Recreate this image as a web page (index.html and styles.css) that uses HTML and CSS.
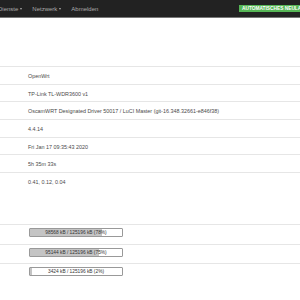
FILE: index.html
```html
<!DOCTYPE html>
<html>
<head>
<meta charset="utf-8">
<link rel="stylesheet" href="styles.css">
</head>
<body>
<header class="navbar">
  <nav class="nav">
    <span class="nav-item first">Dienste <span class="caret"></span></span>
    <span class="nav-item">Netzwerk <span class="caret"></span></span>
    <span class="nav-item">Abmelden</span>
  </nav>
  <span class="badge">AUTOMATISCHES NEULADEN</span>
</header>
<main class="content">
  <div class="table system">
    <div class="row"><div class="label"></div><div class="value">OpenWrt</div></div>
    <div class="row"><div class="label"></div><div class="value">TP-Link TL-WDR3600 v1</div></div>
    <div class="row"><div class="label"></div><div class="value">OscamWRT Designated Driver 50017 / LuCI Master (git-16.348.32661-e846f38)</div></div>
    <div class="row"><div class="label"></div><div class="value">4.4.14</div></div>
    <div class="row"><div class="label"></div><div class="value">Fri Jan 17 09:35:43 2020</div></div>
    <div class="row"><div class="label"></div><div class="value">5h 35m 33s</div></div>
    <div class="row tall"><div class="label"></div><div class="value">0.41, 0.12, 0.04</div></div>
  </div>
  <div class="table memory">
    <div class="row mem"><div class="label"></div><div class="value"><div class="bar"><div class="fill" style="width:78%"></div><span class="bar-text">98568 kB / 125196 kB (78%)</span></div></div></div>
    <div class="row mem"><div class="label"></div><div class="value"><div class="bar"><div class="fill" style="width:75%"></div><span class="bar-text">95144 kB / 125196 kB (75%)</span></div></div></div>
    <div class="row mem"><div class="label"></div><div class="value"><div class="bar"><div class="fill" style="width:2%"></div><span class="bar-text">3424 kB / 125196 kB (2%)</span></div></div></div>
  </div>
</main>
</body>
</html>
```
FILE: styles.css
```css
html, body {
  margin: 0;
  padding: 0;
  background: #fff;
}
body {
  font-family: "Liberation Sans", Arial, sans-serif;
  font-size: 6px;
  color: #4a4a4a;
  width: 300px;
  height: 300px;
  overflow: hidden;
}
.navbar {
  height: 17px;
  background: #222;
  border-bottom: 1px solid #777;
  display: flex;
  align-items: center;
  justify-content: space-between;
}
.nav {
  display: flex;
  align-items: center;
  gap: 10px;
  margin-left: -2px;
}
.nav-item {
  color: #aaa;
  display: flex;
  align-items: center;
  gap: 2px;
}
.caret {
  display: inline-block;
  width: 0;
  height: 0;
  border-left: 1.5px solid transparent;
  border-right: 1.5px solid transparent;
  border-top: 2px solid #aaa;
}
.badge {
  background: #55b555;
  color: #fff;
  font-weight: bold;
  font-size: 4.8px;
  line-height: 7px;
  padding: 0 0 0 3px;
  white-space: nowrap;
  width: 58px;
  overflow: hidden;
}
.content {
  padding-top: 48px;
}
.row {
  display: flex;
  border-top: 1px solid #e6e6e6;
  height: 17.67px;
  box-sizing: border-box;
}
.row.tall {
  height: 52px;
}
.row.mem {
  height: 19.67px;
}
.label {
  width: 28px;
  flex: none;
}
.value {
  padding-top: 6px;
  line-height: 7px;
  font-size: 5.4px;
  white-space: nowrap;
}
.mem .value {
  padding-top: 3px;
}
.bar {
  position: relative;
  width: 92px;
  height: 7px;
  border: 1px solid #999;
  border-radius: 1px;
  background: #fff;
  margin-left: 1px;
}
.fill {
  height: 100%;
  background: #c4c4c4;
}
.bar-text {
  position: absolute;
  inset: 0;
  text-align: center;
  font-size: 4.8px;
  line-height: 7px;
  color: #333;
}
```
